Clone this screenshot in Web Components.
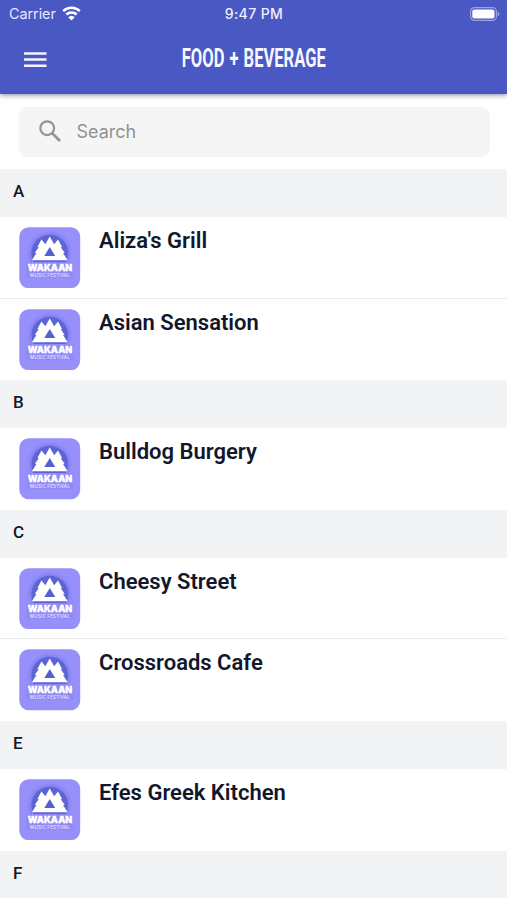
<!DOCTYPE html>
<html lang="en">
<head>
<meta charset="utf-8">
<title>Food + Beverage</title>
<style>
html,body{margin:0;height:100%;overflow:hidden;background:#fff}
</style>
</head>
<body>
<vendor-app></vendor-app>
<script>
const define = (name, html) => customElements.define(name, class extends HTMLElement {
  constructor() {
    super();
    this.attachShadow({mode: 'open'}).innerHTML = html;
  }
});

define('status-bar', `
<style>
:host{display:grid;grid-template-columns:1fr auto 1fr;align-items:center;height:27px;padding:0 8px 0 9px;box-sizing:border-box;font:15px/27px Inter,sans-serif;color:#e6e9ff}
.left{display:flex;align-items:center;gap:6px}
.time{font-weight:500;font-size:14px;letter-spacing:.4px;color:#eef0ff}
.battery{justify-self:end;display:block;margin-right:-1px}
.carrier{font-size:14.4px;letter-spacing:-.05px}
svg{display:block}
</style>
<div class="left"><span class="carrier">Carrier</span>
<svg width="19" height="15" viewBox="0 0 19 15"><g fill="none" stroke="#fff" stroke-width="2.5"><path d="M1.2 5.2a12 12 0 0 1 16.6 0"/><path d="M4.3 8.5a7.5 7.5 0 0 1 10.4 0"/></g><path d="M6.2 11.2a4.8 4.8 0 0 1 6.6 0L9.5 14.4z" fill="#fff"/></svg></div>
<span class="time">9:47 PM</span>
<svg class="battery" width="30" height="14" viewBox="0 0 30 14"><rect x=".6" y=".6" width="25.8" height="12.8" rx="3.8" fill="none" stroke="#9aa3e4" stroke-width="1.2"/><rect x="2.3" y="2.5" width="22.2" height="9" rx="2" fill="#fff"/><path d="M27.6 4.6c2.4.8 2.4 4 0 4.8z" fill="#9aa3e4"/></svg>`);

define('nav-bar', `
<style>
:host{display:grid;grid-template-columns:1fr auto 1fr;align-items:center;height:67px;padding:0 23px 2px 24px;box-sizing:border-box}
svg{display:block}
.title{font:700 26.4px/32px Roboto,sans-serif;color:#f5f6ff;white-space:nowrap;word-spacing:1.5px;margin-top:-4px;transform:scaleX(.628)}
</style>
<svg width="23" height="16" viewBox="0 0 23 16"><path d="M0 1.4h22.5M0 7.6h22.5M0 13.8h22.5" stroke="#f4f5ff" stroke-width="2.5"/></svg>
<span class="title">FOOD + BEVERAGE</span>`);

define('app-header', `
<style>
:host{display:block;background:#4958c2;box-shadow:0 1px 5px rgba(20,20,60,.5);position:relative}
</style><slot></slot>`);

define('search-field', `
<style>
:host{display:flex;align-items:center;gap:16px;height:50.5px;margin:12.5px 17px 12.3px 18.5px;padding-left:20px;box-sizing:border-box;border-radius:8px;background:#f5f5f5;color:#929292;font:18px Inter,sans-serif}
svg{display:block;margin-top:-1px}
</style>
<svg width="22" height="22" viewBox="0 0 22 22" fill="none" stroke="#949494" stroke-width="2.2"><circle cx="8.2" cy="8.2" r="6.9"/><path d="M13 13l8 8" stroke-width="2.7"/></svg><span><slot></slot></span>`);

define('section-head', `
<style>
:host{display:block;height:47.8px;padding-left:13px;box-sizing:border-box;background:#f2f3f5;color:#12172b;font:500 17px/45.4px Roboto,sans-serif}
</style><slot></slot>`);

define('festival-logo', `
<style>:host{display:block;width:62px;height:62px}svg{display:block}text{fill:#fff;font-family:Inter,sans-serif}</style>
<svg width="61.5" height="61.5" viewBox="0 0 62 62">
<defs><radialGradient id="g"><stop offset=".75" stop-color="#7d7cf0"/><stop offset="1" stop-color="#978ffa"/></radialGradient></defs>
<rect x=".3" y=".3" width="61.4" height="61.4" rx="9.5" fill="#978ffa"/>
<circle cx="31" cy="26.3" r="23" fill="url(#g)"/>
<circle cx="31" cy="26.3" r="18.5" fill="#5d65d5"/>
<path d="M7 35.3h48v16H7z" fill="#9089f8"/>
<path d="M31 9.5l4.4 8 4-5 4 7.7-1.3.2 3.9 5.5-1.6.3 4.6 7.3H13l4.6-7.3-1.6-.3 3.9-5.5-1.3-.2 4-7.7 4 5z" fill="#fff"/>
<path d="M31 20.2L36.5 29.2h-11z" fill="#5360ce"/>
<text x="8.8" y="44.8" font-size="9.4" font-weight="900" textLength="45" lengthAdjust="spacingAndGlyphs" stroke="#fff" stroke-width=".3">WAKAAN</text>
<text x="11.2" y="50.9" font-size="4.5" font-weight="500" textLength="40" lengthAdjust="spacing" fill-opacity=".85">MUSIC FESTIVAL</text>
</svg>`);

define('vendor-row', `
<style>
:host{display:flex;gap:18px;height:81.7px;padding:9.9px 18.5px 0 19px;box-sizing:border-box;background:#fff;color:#12172b;font:600 22px/27px Roboto,sans-serif}
:host([divided]){border-bottom:1px solid #ebecef}
</style><festival-logo></festival-logo><span><slot></slot></span>`);

define('vendor-app', `
<style>:host{display:flex;flex-direction:column;height:900px;overflow:hidden;background:#fff}
app-header,search-field,section-head,vendor-row{flex:none}</style>
<app-header><status-bar></status-bar><nav-bar></nav-bar></app-header>
<search-field>Search</search-field>
<section-head>A</section-head>
<vendor-row divided>Aliza's Grill</vendor-row>
<vendor-row>Asian Sensation</vendor-row>
<section-head>B</section-head>
<vendor-row>Bulldog Burgery</vendor-row>
<section-head>C</section-head>
<vendor-row divided>Cheesy Street</vendor-row>
<vendor-row>Crossroads Cafe</vendor-row>
<section-head>E</section-head>
<vendor-row>Efes Greek Kitchen</vendor-row>
<section-head>F</section-head>`);
</script>
</body>
</html>
